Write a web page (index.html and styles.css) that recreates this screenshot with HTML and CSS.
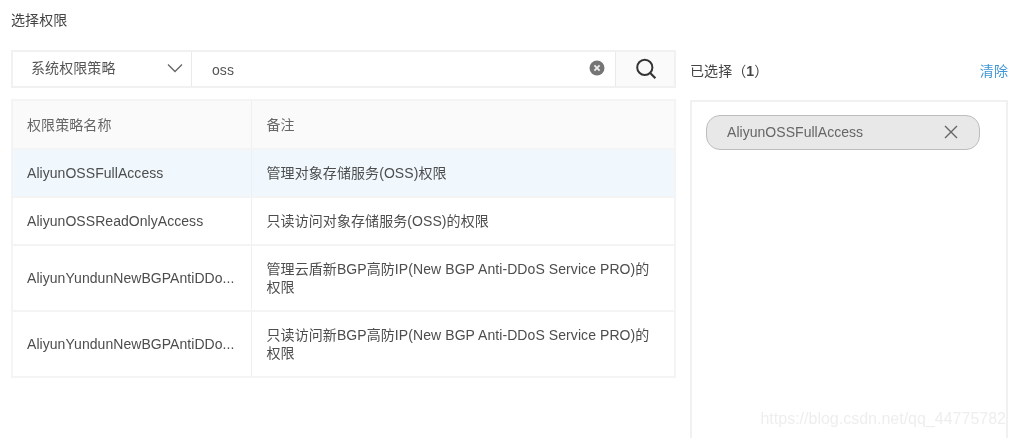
FILE: index.html
```html
<!DOCTYPE html>
<html lang="zh-CN">
<head>
<meta charset="utf-8">
<title>选择权限</title>
<link rel="stylesheet" href="styles.css">
</head>
<body>
<div class="page">
  <div class="page-title">选择权限</div>
  <div class="columns">
    <section class="left">
      <div class="search">
        <div class="select">
          <span>系统权限策略</span>
          <svg class="chevron" viewBox="0 0 16 10" width="16" height="10"><path d="M1 1.5 8 8.5 15 1.5" fill="none" stroke="#666" stroke-width="1.3"/></svg>
        </div>
        <div class="input">
          <span class="query">oss</span>
          <svg class="clear-icon" viewBox="0 0 16 16" width="16" height="16"><circle cx="8" cy="8" r="7.5" fill="#757575"/><path d="M5.4 5.4 10.6 10.6M10.6 5.4 5.4 10.6" stroke="#eee" stroke-width="1.8" fill="none"/></svg>
        </div>
        <div class="search-btn">
          <svg viewBox="0 0 22 22" width="22" height="22"><circle cx="9.8" cy="9.4" r="7.6" fill="none" stroke="#333" stroke-width="2"/><path d="M15.2 15 20.4 20.2" stroke="#333" stroke-width="2.2" fill="none"/></svg>
        </div>
      </div>
      <table class="policies">
        <thead>
          <tr><th class="col-name">权限策略名称</th><th>备注</th></tr>
        </thead>
        <tbody>
          <tr class="selected"><td class="name">AliyunOSSFullAccess</td><td>管理对象存储服务(OSS)权限</td></tr>
          <tr><td class="name">AliyunOSSReadOnlyAccess</td><td>只读访问对象存储服务(OSS)的权限</td></tr>
          <tr class="tall"><td class="name">AliyunYundunNewBGPAntiDDo...</td><td>管理云盾新BGP高防IP(New BGP Anti-DDoS Service PRO)的权限</td></tr>
          <tr class="tall"><td class="name">AliyunYundunNewBGPAntiDDo...</td><td>只读访问新BGP高防IP(New BGP Anti-DDoS Service PRO)的权限</td></tr>
        </tbody>
      </table>
    </section>
    <section class="right">
      <div class="right-head">
        <span class="count">已选择（<b>1</b>）</span>
        <a class="clear-link">清除</a>
      </div>
      <div class="picked">
        <div class="chip">
          <span>AliyunOSSFullAccess</span>
          <svg viewBox="0 0 14 14" width="14" height="14"><path d="M1 1 13 13M13 1 1 13" stroke="#666" stroke-width="1.4" fill="none"/></svg>
        </div>
      </div>
    </section>
  </div>
  <div class="watermark">https://blog.csdn.net/qq_44775782</div>
</div>
</body>
</html>
```
FILE: styles.css
```css
* { box-sizing: border-box; }
html, body { margin: 0; height: 100%; overflow: hidden; background: #fff; }
.page {
  position: relative;
  width: 1015px;
  height: 438px;
  padding: 10px 7px 0 11px;
  overflow: hidden;
  font: 14px/20px "Liberation Sans", "Noto Sans CJK SC", sans-serif;
  letter-spacing: 0.08px;
  color: #4a4a4a;
  filter: blur(0.4px);
}
.page-title { height: 20px; color: #444; }
.columns { display: flex; gap: 14px; margin-top: 20px; }
.left { width: 665px; flex: none; }
.right { flex: 1; min-width: 0; display: flex; flex-direction: column; }
.search {
  display: flex;
  height: 38px;
  border: 2px solid #f1f1f1;
  background: #fff;
}
.select {
  width: 179px;
  flex: none;
  display: flex;
  align-items: center;
  justify-content: space-between;
  padding: 0 8px 2px 18px;
  border-right: 1px solid #eaeaea;
  color: #555;
}
.input {
  flex: 1;
  display: flex;
  align-items: center;
  justify-content: space-between;
  padding: 1px 10px 0 20px;
}
.query { color: #555; }
.clear-icon { margin-top: -3px; }
.search-btn {
  width: 59px;
  flex: none;
  display: flex;
  align-items: center;
  justify-content: center;
  padding-left: 1px;
  border-left: 1px solid #eaeaea;
  background: #fafafa;
}
.policies {
  width: 100%;
  margin-top: 11px;
  table-layout: fixed;
  border-collapse: collapse;
  border: 2px solid #f4f4f4;
}
.policies th, .policies td {
  padding: 0 23px 0 15px;
  border-bottom: 2px solid #f4f4f4;
  border-right: 1px solid #efefef;
  text-align: left;
  vertical-align: middle;
  font-weight: normal;
}
.policies th { height: 49px; background: #fafafa; color: #666; }
.policies td { height: 48px; color: #4d4d4d; line-height: 18px; }
.policies .col-name { width: 239px; padding-left: 14px; }
.policies .name { padding: 0 0 0 14px; white-space: nowrap; overflow: hidden; letter-spacing: 0.05px; }
.policies .tall td { height: 66px; }
.policies .selected td { background: #f0f8fd; }
.right-head {
  height: 38px;
  display: flex;
  align-items: center;
  justify-content: space-between;
  padding-top: 3px;
}
.count { color: #444; }
.count b { font-weight: bold; }
.clear-link { color: #3f95d6; }
.picked {
  margin-top: 12px;
  height: 345px;
  border: 2px solid #f1f1f1;
  border-bottom: 0;
  padding: 13px 26px 0 14px;
}
.chip {
  height: 35px;
  display: flex;
  align-items: center;
  justify-content: space-between;
  padding: 0 21px 1px 20px;
  border: 1.5px solid #bdbdbd;
  border-radius: 14px;
  background: #e8e8e8;
  color: #666;
  letter-spacing: 0.04px;
}
.watermark {
  position: absolute;
  right: 9px;
  bottom: 9px;
  font-size: 16px;
  line-height: 20px;
  letter-spacing: 0;
  color: #eeeeee;
}
```
